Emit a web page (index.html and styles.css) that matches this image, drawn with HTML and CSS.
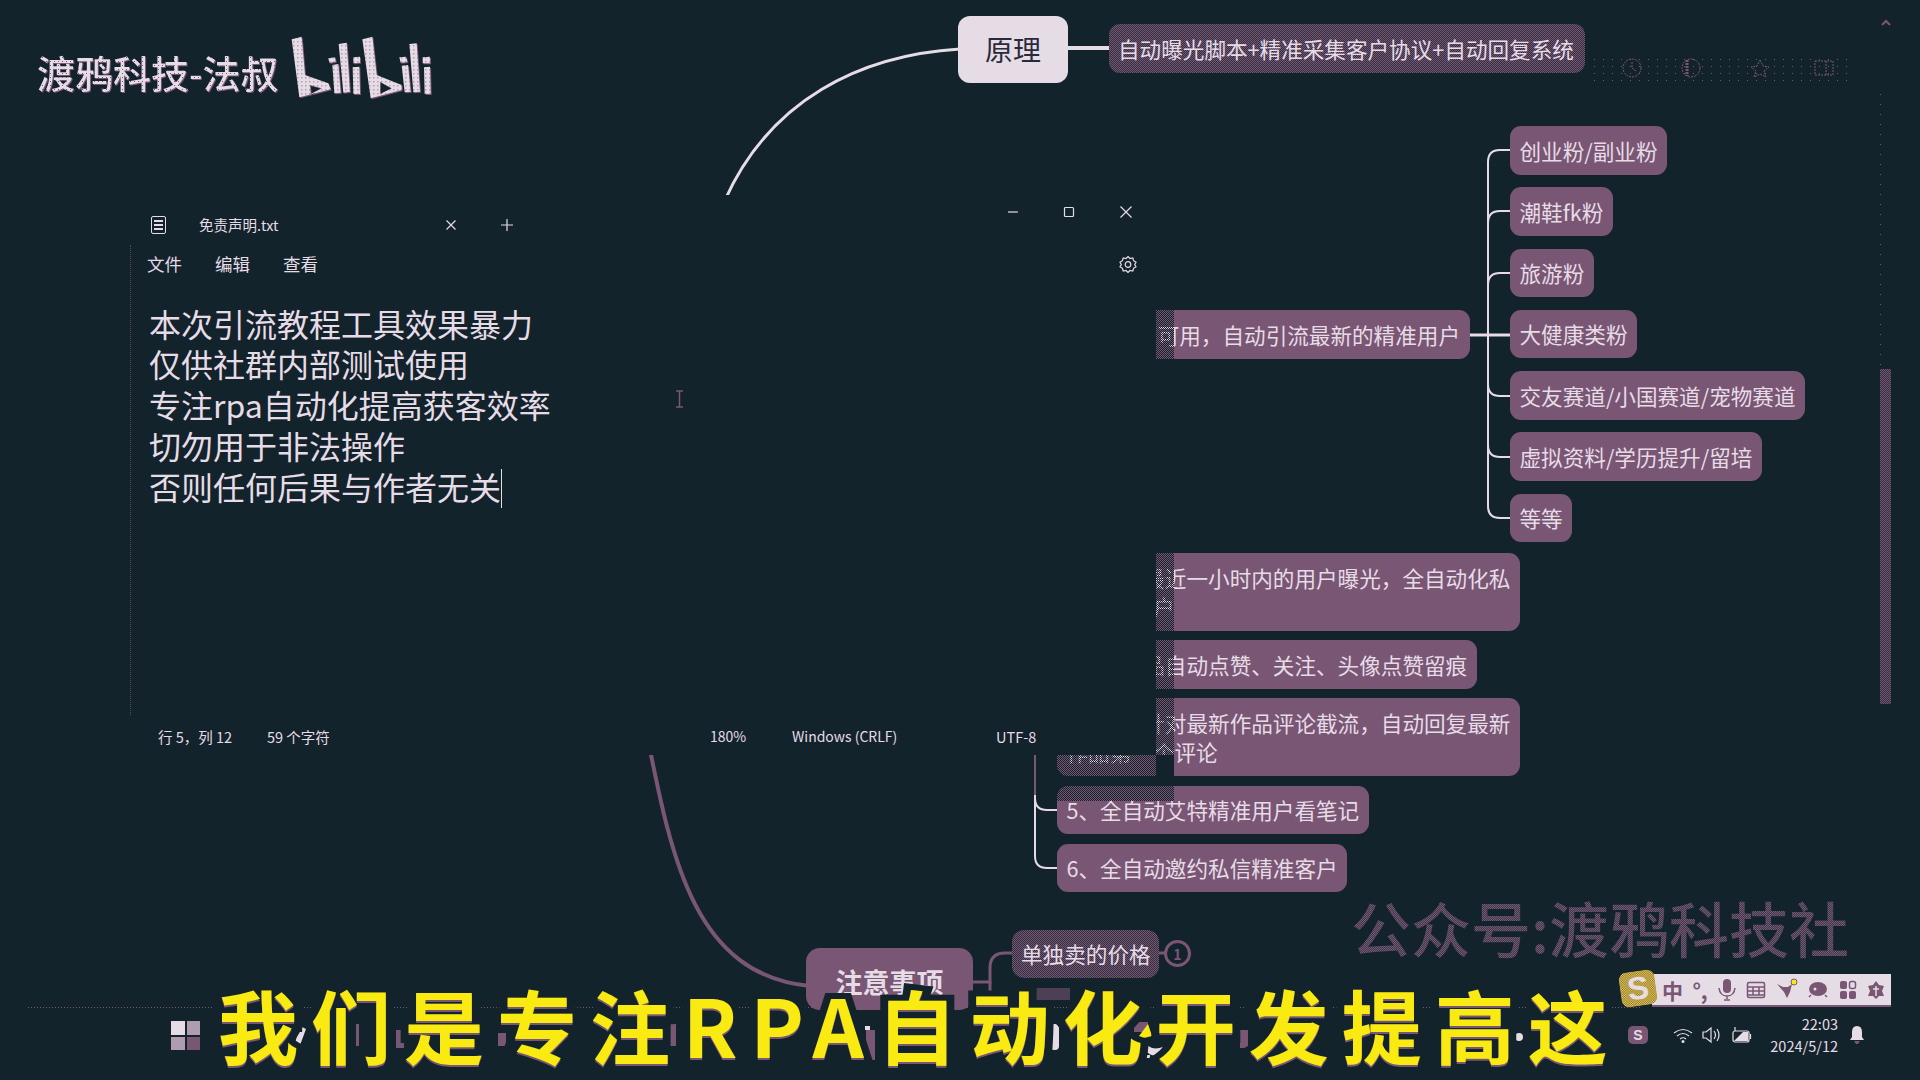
FILE: index.html
```html
<!DOCTYPE html>
<html lang="zh-CN">
<head>
<meta charset="utf-8">
<title>免责声明.txt</title>
<link rel="stylesheet" href="styles.css">
</head>
<body>
<div class="stage">
  <div class="noise"></div>
  <svg class="wires" width="1920" height="1080" viewBox="0 0 1920 1080" fill="none">
    <path class="w-light w3" d="M960 49C860 55 770 100 725 200"/>
    <path class="w-light w4" d="M1068 48H1110"/>
    <path class="w-purple w4" d="M648 740C672 860 695 975 810 986"/>
    <path class="w-light w3" d="M1470 335H1510"/>
    <path class="w-light w2" d="M1510 150H1500Q1488 150 1488 162V506Q1488 518 1500 518H1510"/>
    <path class="w-light w2" d="M1510 211H1500Q1488 211 1488 223M1510 273H1500Q1488 273 1488 285M1510 396H1500Q1488 396 1488 384M1510 457H1500Q1488 457 1488 445"/>
    <path class="w-purple w2" d="M1035 750V810"/>
    <path class="w-light w2" d="M1035 795V856Q1035 868 1047 868H1057M1057 810H1047Q1035 810 1035 798"/>
    <path class="w-purple w3" d="M973 982H990V968Q990 953 1005 953H1014M1159 953H1166"/>
    <path class="w-purple w3" d="M990 982V1010"/>
    <path class="w-purple w1" stroke-dasharray="1 2" d="M28 1007.500H1640"/>
    <path class="w-purple w1" stroke-dasharray="1 9" d="M1880.500 94V369"/>
    <g class="w-faint w1" stroke-dasharray="2 1">
      <circle cx="1632" cy="68" r="9"/><path d="M1632 62V68L1636 71"/>
      <circle cx="1691" cy="68" r="9"/><path class="w3" d="M1687 60V76"/>
      <path d="M1760 60L1763 66L1769 67L1764 71L1766 77L1760 74L1754 77L1756 71L1751 67L1757 66Z"/>
      <path d="M1815 61H1833V75H1815ZM1826 61V75"/>
    </g>
    <path class="w-purple w2" d="M1882 25L1886 21L1890 25"/>
    <g class="bits-l">
      <path d="M300 1026L306 1029L299 1048L294 1046Z"/><rect x="1050" y="1024" width="9" height="26" rx="4"/>
      <path d="M1143 1040Q1150 1052 1163 1047L1155 1056Q1143 1054 1143 1040Z"/><rect x="1144" y="1055" width="6" height="3"/>
      <circle cx="1519" cy="1037" r="4"/><rect x="865" y="1026" width="5" height="4"/>
    </g>
    <g class="bits-p">
      <rect x="356" y="1024" width="3" height="22"/><rect x="396" y="1030" width="8" height="18"/><rect x="498" y="1028" width="8" height="18"/>
      <rect x="670" y="1024" width="6" height="22"/><rect x="866" y="1030" width="9" height="30"/><rect x="1040" y="1028" width="8" height="22"/>
      <rect x="1134" y="1022" width="14" height="10"/><rect x="1240" y="1030" width="8" height="18"/>
    </g>
    <rect class="bits-d" x="1030" y="988" width="40" height="12"/>
    <path class="bits-y" d="M1136 1040L1148 1024L1152 1036Z"/>
  </svg>

  <div class="brand">
    <span class="brand-name">渡鸦科技-法叔</span>
    <svg class="bili" width="460" height="100" viewBox="0 0 1380 300">
      <defs>
        <pattern id="dots" width="12" height="12" patternUnits="userSpaceOnUse">
          <rect width="12" height="12" class="dot-bg"/>
          <rect x="4" y="4" width="3" height="3" class="dot-fg"/>
        </pattern>
      </defs>
      <path fill-rule="evenodd" d="M875 58L905 50L915 165L985 190L992 208L898 232ZM930 195L932 222L965 205Z"/>
      <path d="M985 115L1005 112L1007 125L988 128ZM997 135L1015 132L1022 218L1003 220ZM1016 72L1040 68L1050 215L1030 218ZM1060 112L1080 110V128L1060 130ZM1058 142L1078 140L1080 222L1060 222Z"/>
      <path fill-rule="evenodd" d="M1087 58L1117 50L1130 165L1205 195V210L1112 235ZM1140 185L1140 222L1175 205Z"/>
      <path d="M1198 112L1218 110L1222 126L1202 128ZM1205 137L1224 135L1232 215L1214 217ZM1228 72L1250 70L1260 215L1240 217ZM1268 112L1290 110V130L1268 130ZM1272 142L1290 140L1292 222L1274 222Z"/>
    </svg>
  </div>

  <div class="node root-node">原理</div>
  <div class="node dither principle">自动曝光脚本+精准采集客户协议+自动回复系统</div>

  <div class="node use-node">3、全平台通用可用，自动引流最新的精准用户</div>
  <div class="fans">
    <div class="node">创业粉/副业粉</div>
    <div class="node">潮鞋fk粉</div>
    <div class="node">旅游粉</div>
    <div class="node">大健康类粉</div>
    <div class="node">交友赛道/小国赛道/宠物赛道</div>
    <div class="node">虚拟资料/学历提升/留培</div>
    <div class="node">等等</div>
  </div>

  <div class="features">
    <div class="node">3、获取最近一小时内的用户曝光，全自动化私<br>信精准客户</div>
    <div class="node">2、对作品自动点赞、关注、头像点赞留痕</div>
    <div class="node">4、实时针对最新作品评论截流，自动回复最新<br>作品第一个评论</div>
    <div class="node">5、全自动艾特精准用户看笔记</div>
    <div class="node">6、全自动邀约私信精准客户</div>
  </div>

  <div class="watermark">公众号:渡鸦科技社</div>
  <div class="node notice">注意事项</div>
  <div class="node dither price">单独卖的价格</div>
  <div class="badge">1</div>
  <div class="scroll-thumb dither"></div>

  <section class="window">
    <div class="edge"></div>
    <header class="tabbar">
      <svg class="tab-icon" width="15" height="18" viewBox="0 0 15 18" fill="none">
        <rect x="0.500" y="0.500" width="14" height="17" rx="1.500" class="i-fill"/>
        <path class="i-line" d="M3 5H12M3 9H12M3 13H12"/>
      </svg>
      <span class="tab-title">免责声明.txt</span>
      <svg class="tab-close" width="12" height="12" viewBox="0 0 12 12"><path class="i-stroke" d="M1.500 1.500L10.500 10.500M10.500 1.500L1.500 10.500"/></svg>
      <svg class="tab-add" width="12" height="12" viewBox="0 0 12 12"><path class="i-stroke" d="M6 0V12M0 6H12"/></svg>
      <div class="controls">
        <svg width="12" height="12" viewBox="0 0 12 12"><path class="i-stroke" d="M1 6H11"/></svg>
        <svg width="12" height="12" viewBox="0 0 12 12"><rect class="i-stroke" x="1.500" y="1.500" width="9" height="9" rx="1"/></svg>
        <svg width="14" height="14" viewBox="0 0 14 14"><path class="i-stroke" d="M1.500 1.500L12.500 12.500M12.500 1.500L1.500 12.500"/></svg>
      </div>
    </header>
    <nav class="menubar">
      <span>文件</span><span>编辑</span><span>查看</span>
      <svg class="gear" width="18" height="18" viewBox="0 0 18 18" fill="none">
        <path class="i-stroke" d="M9 1.500L11 3.500L13.800 3L14.600 5.700L17 7.200L15.700 9.500L17 11.800L14.600 13.300L13.800 16L11 15.500L9 17.500L7 15.500L4.200 16L3.400 13.300L1 11.800L2.300 9.500L1 7.200L3.400 5.700L4.200 3L7 3.500Z"/>
        <circle class="i-stroke" cx="9" cy="9.500" r="2.800"/>
      </svg>
    </nav>
    <div class="editor">
      <p>本次引流教程工具效果暴力</p>
      <p>仅供社群内部测试使用</p>
      <p>专注rpa自动化提高获客效率</p>
      <p>切勿用于非法操作</p>
      <p>否则任何后果与作者无关<i class="caret"></i></p>
    </div>
    <footer class="status">
      <span class="c-pos">行 5，列 12</span>
      <span class="c-count">59 个字符</span>
      <span class="c-zoom">180%</span>
      <span class="c-eol">Windows (CRLF)</span>
      <span>UTF-8</span>
    </footer>
    <svg class="ibeam" width="9" height="18" viewBox="0 0 9 18"><path d="M1 1H8M4.500 1V17M1 17H8"/></svg>
  </section>

  <div class="subtitle" data-text="我们是专注RPA自动化开发提高这">我们是专注RPA自动化开发提高这</div>

  <div class="start"><i></i><i></i><i></i><i></i></div>

  <div class="ime-logo">S</div>
  <div class="ime">
    <span class="ime-t">中</span>
    <span class="ime-t">°,</span>
    <svg width="20" height="24" viewBox="0 0 20 24" class="ime-i"><rect x="6" y="1" width="8" height="14" rx="4" class="f"/><path class="s" d="M2 10Q3 18 10 18Q17 18 18 10M10 18V21M7 22H13"/></svg>
    <svg width="20" height="20" viewBox="0 0 20 20" class="ime-i"><rect x="1.500" y="2.500" width="17" height="15" rx="1.500" class="s"/><path class="s" d="M2 7H18M2 11H18M2 15H18M7 7V15M13 7V15"/></svg>
    <svg width="22" height="24" viewBox="0 0 22 24" class="ime-i"><path class="f" d="M1 6L7 9L12 9L16 6L14 14L11 20L8 14Z"/><circle class="y" cx="18" cy="4" r="3"/></svg>
    <svg width="22" height="20" viewBox="0 0 22 20" class="ime-i"><ellipse class="f" cx="11" cy="9" rx="9" ry="7"/><circle class="d" cx="8" cy="9" r="1.500"/><path class="s" d="M13 7L15 11M2 17L4 15M20 17L18 15"/></svg>
    <svg width="18" height="20" viewBox="0 0 18 20" class="ime-i"><rect class="f" x="1" y="1" width="7" height="8" rx="2"/><rect class="s" x="10.500" y="1.500" width="6" height="7" rx="2"/><rect class="f" x="1" y="11" width="7" height="8" rx="2"/><rect class="f" x="10" y="11" width="7" height="8" rx="2"/></svg>
    <svg width="20" height="20" viewBox="0 0 20 20" class="ime-i"><path class="f" d="M10 1L13 5L18 6L16 11L18 16L13 16L10 19L7 16L2 16L4 11L2 6L7 5Z"/><path class="t" d="M10 6V16M7 9H13"/></svg>
  </div>

  <div class="tray">
    <div class="tray-s">S</div>
    <svg class="t-wifi" width="20" height="16" viewBox="0 0 20 16" fill="none"><path class="i-stroke" d="M1 6Q10 -1 19 6M4 9Q10 4 16 9M7 12Q10 9.500 13 12"/><circle class="i-dot" cx="10" cy="14.500" r="1.500"/></svg>
    <svg class="t-vol" width="20" height="18" viewBox="0 0 20 18" fill="none"><path class="i-stroke" d="M1 6V12H4L9 16V2L4 6ZM12 5Q15 9 12 13M15 3Q19 9 15 15"/></svg>
    <svg class="t-bat" width="20" height="18" viewBox="0 0 20 18" fill="none"><rect class="i-stroke" x="1" y="5" width="16" height="11" rx="2"/><path class="i-dot" d="M2 15L11 6H16V15Z"/><path class="i-stroke" d="M3 5V1M18.500 8V13"/></svg>
    <div class="clock"><span>22:03</span><span>2024/5/12</span></div>
    <svg class="t-bell" width="16" height="20" viewBox="0 0 16 20"><path class="i-dot" d="M8 1Q13 1 13 7V12L15 15H1L3 12V7Q3 1 8 1Z"/><path class="i-purple" d="M5 16H11L9 19H7Z"/></svg>
  </div>
</div>
</body>
</html>
```

FILE: styles.css
```css
:root {
  --bg: #13232c;
  --purple: #7a5675;
  --light: #e6dce6;
  --yellow: #f9ea12;
  --cjk: "Noto Sans CJK SC", "Noto Sans", sans-serif;
}
* { box-sizing: border-box; }
html, body { margin: 0; padding: 0; background: var(--bg); }
body { font-family: var(--cjk); color: var(--light); }
.stage { position: relative; width: 1920px; height: 1080px; overflow: hidden; background: var(--bg); }

/* connectors */
.wires { position: absolute; inset: 0; }
.w-light { stroke: var(--light); }
.w-purple { stroke: var(--purple); }
.w-faint { stroke: #7a5675; }
.w1 { stroke-width: 1; }
.w2 { stroke-width: 2; }
.w3 { stroke-width: 3; }
.w4 { stroke-width: 4; }
.bits-l { fill: var(--light); }
.bits-p { fill: var(--purple); }
.bits-d { fill: #4d3f55; }
.bits-y { fill: var(--yellow); }
.noise { position: absolute; left: 1590px; top: 56px; width: 262px; height: 25px; background: radial-gradient(circle, #7a5675 0 0.7px, transparent 1px) 0 0 / 9px 7px; }

/* brand */
.brand { position: absolute; left: 37px; top: 20px; height: 100px; }
.brand-name {
  position: absolute; left: 0; top: 23.500px; font-size: 38px; line-height: 56px; white-space: nowrap; font-weight: 500;
  background: radial-gradient(circle at 1.500px 1.500px, var(--purple) 0 0.6px, transparent 0.9px) 0 0 / 4px 4px, var(--light);
  -webkit-background-clip: text; background-clip: text; color: transparent;
  filter: drop-shadow(1px 1px 0 var(--purple));
}
.bili { position: absolute; left: -37px; top: 0; fill: url(#dots); filter: drop-shadow(1px 1px 0 var(--purple)); }
.dot-bg { fill: var(--light); }
.dot-fg { fill: var(--purple); }

/* mind map nodes */
.node {
  background: var(--purple);
  color: var(--light);
  border-radius: 11px;
  padding: 9.500px 9.500px;
  font-size: 21.600px;
  line-height: 29.500px;
  white-space: nowrap;
}
.dither { background: repeating-conic-gradient(var(--purple) 0 25%, #2e3040 0 50%) 0 0 / 2px 2px; }
.root-node { position: absolute; left: 958px; top: 16px; width: 110px; height: 67px; padding: 0; display: flex; align-items: center; justify-content: center; background: var(--light); color: #2a2a3a; font-size: 28px; border-radius: 12px; }
.principle { position: absolute; left: 1109px; top: 24px; width: 476px; height: 49px; padding: 9.500px 9px; }
.use-node { position: absolute; right: 450.500px; top: 310px; height: 49px; }
.fans { position: absolute; left: 1510px; top: 126px; display: flex; flex-direction: column; align-items: flex-start; gap: 12.800px; }
.features { position: absolute; left: 1057px; top: 553px; display: flex; flex-direction: column; align-items: flex-start; gap: 9.400px; }
.notice { position: absolute; left: 806px; top: 948px; width: 167px; height: 62px; padding: 19px 0 0; text-align: center; font-size: 27px; font-weight: 700; border-radius: 14px; }
.price { position: absolute; left: 1012px; top: 930px; width: 147px; height: 48px; padding: 9px 9px; border-radius: 12px; }
.badge { position: absolute; left: 1164px; top: 940px; width: 27px; height: 27px; border: 3px solid var(--purple); border-radius: 50%; display: flex; align-items: center; justify-content: center; font-size: 14px; font-weight: 700; color: var(--purple); }
.watermark {
  position: absolute; left: 1351px; top: 884px; font-size: 60px; line-height: 86px; white-space: nowrap; font-weight: 500;
  background: repeating-conic-gradient(var(--purple) 0 25%, #3a3a4c 0 50%) 0 0 / 2px 2px;
  -webkit-background-clip: text; background-clip: text; color: transparent;
}
.scroll-thumb { position: absolute; left: 1880px; top: 369px; width: 11px; height: 335px; }

/* notepad window */
.window { position: absolute; left: 130px; top: 195px; width: 1026px; height: 560px; background: var(--bg); display: flex; flex-direction: column; }
.window::before { content: ""; position: absolute; left: 100%; top: 105px; width: 18px; height: 480px; background: repeating-conic-gradient(var(--bg) 0 25%, transparent 0 50%) 0 0 / 2px 2px; }
.window::after { content: ""; position: absolute; right: -18px; top: 100%; width: 136px; height: 46px; background: repeating-conic-gradient(var(--bg) 0 25%, transparent 0 50%) 0 0 / 2px 2px; }
.edge { position: absolute; left: 0; top: 50px; height: 470px; border-left: 1px dotted #5a4560; }
.tabbar { position: relative; height: 48.500px; flex: none; display: flex; align-items: center; padding: 11px 0 0 21px; }
.tab-icon { flex: none; }
.i-fill { stroke: var(--light); fill: none; stroke-width: 1; }
.i-line { stroke: var(--light); stroke-width: 2; }
.i-stroke { stroke: var(--light); stroke-width: 1.200; fill: none; }
.i-dot { fill: var(--light); }
.i-purple { fill: var(--purple); }
.tab-title { margin-left: 33px; font-size: 14.500px; width: 230px; white-space: nowrap; }
.tab-close { margin-left: 16px; }
.tab-add { margin-left: 44px; }
.controls { position: absolute; right: 23px; top: 11px; display: flex; align-items: center; gap: 44px; height: 12px; }
.menubar { height: 40px; flex: none; display: flex; align-items: center; gap: 33px; padding: 0 19px 0 17px; font-size: 17.500px; }
.gear { margin-left: auto; }
.editor { flex: 1; padding: 19px 0 0 19px; font-size: 32px; line-height: 40.800px; white-space: nowrap; }
.editor p { margin: 0; }
.caret { display: inline-block; width: 1px; height: 39px; background: var(--light); vertical-align: -8px; }
.status { height: 34px; flex: none; display: flex; align-items: center; padding: 0 0 4px 28px; font-size: 14.500px; white-space: nowrap; }
.c-pos { width: 109px; }
.c-count { width: 443px; }
.c-zoom { width: 82px; font-size: 14px; }
.c-eol { width: 204px; font-size: 14px; }
.ibeam { position: absolute; left: 545px; top: 195px; fill: none; stroke: var(--purple); stroke-width: 1.500; }

/* subtitle */
.subtitle {
  position: absolute; left: 218px; top: 979px; font-size: 80px; line-height: 92px; font-weight: 700; letter-spacing: 13px; white-space: nowrap;
  color: var(--purple); -webkit-text-stroke: 16px var(--bg); paint-order: stroke fill;
}
.subtitle::after { content: attr(data-text); position: absolute; left: 0; top: -2px; color: var(--yellow); -webkit-text-stroke: 0; }

/* taskbar */
.start { position: absolute; left: 171px; top: 1021px; width: 29px; height: 29px; display: grid; grid-template-columns: 1fr 1fr; gap: 2px; }
.start i:nth-child(1) { background: var(--light); }
.start i:nth-child(2), .start i:nth-child(3) { background: #b09cb0; }
.start i:nth-child(4) { background: var(--purple); }

.ime { position: absolute; left: 1652px; top: 974px; width: 239px; height: 33px; background: var(--light); border-bottom: 2px solid var(--purple); display: flex; align-items: center; justify-content: space-between; padding: 0 5px 0 10px; color: var(--purple); }
.ime-t { font-size: 21px; line-height: 30px; font-weight: 700; }
.ime-i .f { fill: var(--purple); }
.ime-i .s { fill: none; stroke: var(--purple); stroke-width: 1.500; }
.ime-i .y { fill: var(--yellow); stroke: var(--purple); }
.ime-i .d { fill: var(--light); }
.ime-i .t { fill: none; stroke: var(--light); stroke-width: 1.500; }
.ime-logo { position: absolute; left: 1620px; top: 971px; width: 36px; height: 35px; z-index: 2; transform: rotate(-8deg); display: flex; align-items: center; justify-content: center; background: repeating-conic-gradient(var(--yellow) 0 25%, var(--purple) 0 50%) 0 0 / 2px 2px; border-radius: 8px; color: var(--light); font: 700 32px/35px "Liberation Sans", sans-serif; }

.tray { position: absolute; left: 1628px; top: 1012px; width: 240px; height: 46px; display: flex; align-items: center; }
.tray-s { width: 20px; height: 18px; border-radius: 5px; background: var(--purple); color: var(--light); font: 700 14px/18px "Liberation Sans", sans-serif; text-align: center; }
.t-wifi { margin-left: 25px; }
.t-vol { margin-left: 9px; }
.t-bat { margin-left: 10px; }
.clock { margin-left: 20px; width: 66px; display: flex; flex-direction: column; align-items: flex-end; font-size: 14.500px; line-height: 22px; }
.t-bell { margin-left: 11px; }
```
